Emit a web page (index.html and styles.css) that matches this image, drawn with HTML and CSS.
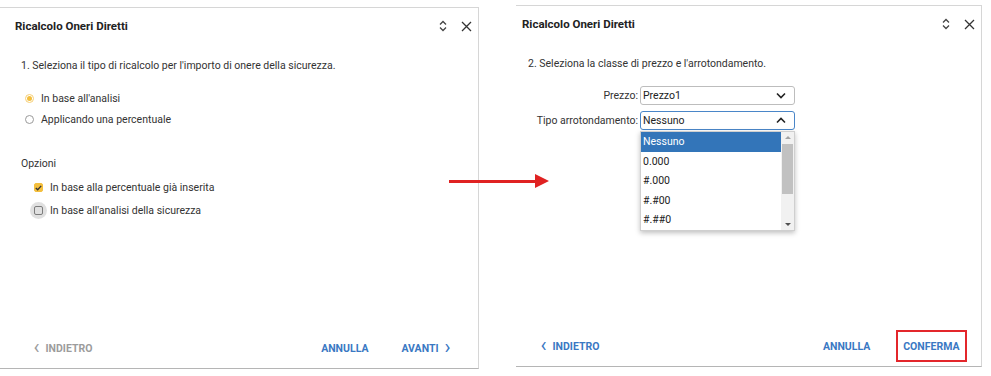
FILE: index.html
```html
<!DOCTYPE html>
<html lang="it">
<head>
    <meta charset="UTF-8">
    <title>Ricalcolo Oneri Diretti</title>
    <link rel="stylesheet" href="styles.css">
</head>
<body>
    <div class="stage">
        <!-- Step 1 -->
        <section class="dialog dialog-first">
            <header class="dialog-header">
                <h1>Ricalcolo Oneri Diretti</h1>
                <div class="dialog-tools">
                    <svg class="tool-sort" width="8" height="12" viewBox="0 0 8 12"><path d="M1 4.5 L4 1.5 L7 4.5 M1 7.5 L4 10.5 L7 7.5" fill="none" stroke="#444" stroke-width="1.3"/></svg>
                    <svg class="tool-close" width="11" height="11" viewBox="0 0 11 11"><path d="M1 1 L10 10 M10 1 L1 10" fill="none" stroke="#333" stroke-width="1.3"/></svg>
                </div>
            </header>
            <div class="dialog-body">
                <p class="step">1. Seleziona il tipo di ricalcolo per l'importo di onere della sicurezza.</p>
                <ul class="radio-list">
                    <li><span class="radio checked"></span>In base all'analisi</li>
                    <li><span class="radio"></span>Applicando una percentuale</li>
                </ul>
                <p class="group-title">Opzioni</p>
                <ul class="check-list">
                    <li><span class="check checked"><svg width="7" height="6" viewBox="0 0 7 6"><path d="M0.8 3 L2.7 4.8 L6.2 0.9" fill="none" stroke="#333" stroke-width="1.3"/></svg></span>In base alla percentuale già inserita</li>
                    <li><span class="check focused"></span>In base all'analisi della sicurezza</li>
                </ul>
            </div>
            <footer class="dialog-footer">
                <button class="btn btn-disabled"><span class="chev">&lsaquo;</span>INDIETRO</button>
                <div class="footer-right">
                    <button class="btn">ANNULLA</button>
                    <button class="btn">AVANTI<span class="chev chev-right">&rsaquo;</span></button>
                </div>
            </footer>
        </section>

        <!-- Step 2 -->
        <section class="dialog dialog-second">
            <header class="dialog-header">
                <h1>Ricalcolo Oneri Diretti</h1>
                <div class="dialog-tools">
                    <svg class="tool-sort" width="8" height="12" viewBox="0 0 8 12"><path d="M1 4.5 L4 1.5 L7 4.5 M1 7.5 L4 10.5 L7 7.5" fill="none" stroke="#444" stroke-width="1.3"/></svg>
                    <svg class="tool-close" width="11" height="11" viewBox="0 0 11 11"><path d="M1 1 L10 10 M10 1 L1 10" fill="none" stroke="#333" stroke-width="1.3"/></svg>
                </div>
            </header>
            <div class="dialog-body">
                <p class="step">2. Seleziona la classe di prezzo e l'arrotondamento.</p>
                <div class="form-grid">
                    <label>Prezzo:</label>
                    <div class="select">
                        <span>Prezzo1</span>
                        <svg width="10" height="7" viewBox="0 0 10 7"><path d="M1 1.5 L5 5.5 L9 1.5" fill="none" stroke="#222" stroke-width="1.6"/></svg>
                    </div>
                    <label>Tipo arrotondamento:</label>
                    <div class="select select-open">
                        <span>Nessuno</span>
                        <svg width="10" height="7" viewBox="0 0 10 7"><path d="M1 5.5 L5 1.5 L9 5.5" fill="none" stroke="#222" stroke-width="1.6"/></svg>
                        <div class="dropdown">
                            <ul class="options">
                                <li class="active">Nessuno</li>
                                <li>0.000</li>
                                <li>#.000</li>
                                <li>#.#00</li>
                                <li>#.##0</li>
                            </ul>
                            <div class="scrollbar">
                                <span class="arrow-up"></span>
                                <span class="thumb"></span>
                                <span class="arrow-down"></span>
                            </div>
                        </div>
                    </div>
                </div>
            </div>
            <footer class="dialog-footer">
                <button class="btn"><span class="chev">&lsaquo;</span>INDIETRO</button>
                <div class="footer-right">
                    <button class="btn">ANNULLA</button>
                    <button class="btn btn-marked">CONFERMA</button>
                </div>
            </footer>
        </section>

        <div class="flow-arrow"></div>
    </div>
</body>
</html>
```

FILE: styles.css
```css
/* Base styles */
* {
    margin: 0;
    padding: 0;
    box-sizing: border-box;
}

:root {
    --text: #333;
    --title: #222;
    --blue: #3a78c3;
    --yellow: #f4bf3e;
    --line: #d6d6d6;
}

body {
    font-family: Roboto, "Liberation Sans", sans-serif;
    font-size: 10.5px;
    color: var(--text);
    background: #fff;
}

.stage {
    position: relative;
    width: 991px;
    height: 376px;
    display: flex;
    align-items: flex-start;
}

/* Dialog */
.dialog {
    display: flex;
    flex-direction: column;
    background: #fff;
    border-top: 1px solid var(--line);
    border-right: 1px solid var(--line);
    border-bottom: 1px solid #b5b5b5;
}

.dialog-first {
    width: 479px;
    height: 362px;
    margin-top: 7px;
    padding-left: 9px;
}

.dialog-second {
    width: 466px;
    height: 362px;
    margin-top: 5px;
    margin-left: 37px;
}

.dialog-header {
    display: flex;
    justify-content: space-between;
    align-items: center;
    padding: 11px 6px 10px 6px;
}

.dialog-header h1 {
    font-size: 11.5px;
    font-weight: 700;
    line-height: 14px;
    color: var(--title);
}

.dialog-tools {
    display: flex;
    align-items: center;
    gap: 14px;
}

.dialog-body {
    flex: 1;
    padding: 16px 12px 0;
}

.step {
    line-height: 14px;
}

/* Radio and checkboxes */
.radio-list,
.check-list {
    list-style: none;
}

.radio-list {
    margin-top: 15px;
    padding-left: 4px;
}

.radio-list li,
.check-list li {
    display: flex;
    align-items: center;
    height: 21px;
}

.radio {
    width: 9px;
    height: 9px;
    border: 1px solid #9a9a9a;
    border-radius: 50%;
    margin-right: 7px;
    display: flex;
    align-items: center;
    justify-content: center;
}

.radio.checked {
    border-color: #f6cf77;
}

.radio.checked::after {
    content: '';
    width: 5px;
    height: 5px;
    border-radius: 50%;
    background: var(--yellow);
}

.group-title {
    margin-top: 27px;
    line-height: 14px;
}

.check-list {
    margin-top: 5px;
    padding-left: 13px;
}

.check-list li {
    height: 23px;
}

.check {
    position: relative;
    width: 9px;
    height: 9px;
    border: 1px solid #8e8e8e;
    border-radius: 2px;
    margin-right: 7px;
    display: flex;
    align-items: center;
    justify-content: center;
}

.check.checked {
    border-color: var(--yellow);
    background: var(--yellow);
}

.check.focused::before {
    content: '';
    position: absolute;
    left: -5px;
    top: -5px;
    width: 17px;
    height: 17px;
    border-radius: 50%;
    background: rgba(0, 0, 0, 0.12);
}

/* Form */
.form-grid {
    display: grid;
    grid-template-columns: 110px 155px;
    column-gap: 2px;
    row-gap: 6px;
    margin-top: 15px;
    align-items: center;
}

.form-grid label {
    text-align: right;
}

.select {
    position: relative;
    height: 19px;
    border: 1px solid #bdbdbd;
    border-radius: 3px;
    display: flex;
    align-items: center;
    justify-content: space-between;
    padding: 0 8px 0 2px;
    color: #222;
}

.select-open {
    border-color: #4a86c8;
}

.dropdown {
    position: absolute;
    left: -1px;
    top: 19px;
    width: 155px;
    height: 100px;
    display: flex;
    background: #fff;
    border: 1px solid #cfcfcf;
    box-shadow: 0 2px 5px rgba(0, 0, 0, 0.25);
    z-index: 5;
}

.options {
    flex: 1;
    list-style: none;
}

.options li {
    height: 19.6px;
    line-height: 20px;
    padding-left: 2px;
    color: #222;
}

.options li.active {
    background: #3375b9;
    color: #fff;
}

.scrollbar {
    width: 13px;
    background: #f1f1f1;
    display: flex;
    flex-direction: column;
    align-items: center;
    padding: 4px 0;
}

.arrow-up,
.arrow-down {
    width: 0;
    height: 0;
    border-left: 3px solid transparent;
    border-right: 3px solid transparent;
}

.arrow-up {
    border-bottom: 3px solid #a3a3a3;
}

.arrow-down {
    border-top: 3px solid #505050;
}

.thumb {
    width: 11px;
    height: 50px;
    margin: 5px 0 auto;
    background: #c1c1c1;
}

/* Footer */
.dialog-footer {
    display: flex;
    justify-content: space-between;
    align-items: center;
    padding: 0 14px 4px 17px;
}

.dialog-first .dialog-footer {
    padding-right: 20px;
}

.footer-right {
    display: flex;
    gap: 18px;
}

.btn {
    display: flex;
    align-items: center;
    height: 32px;
    padding: 0 5.5px;
    border: 2px solid transparent;
    background: none;
    font-family: Roboto, "Liberation Sans", sans-serif;
    font-size: 10.5px;
    font-weight: 700;
    color: var(--blue);
    cursor: pointer;
}

.btn-disabled {
    color: #9c9c9c;
}

.btn-marked {
    border-color: #e3262b;
}

.chev {
    font-size: 20px;
    font-weight: 400;
    line-height: 14px;
    margin: -3px 6px 0 0;
}

.chev-right {
    margin: -3px 0 0 6px;
}

/* Arrow between steps */
.flow-arrow {
    position: absolute;
    left: 449px;
    top: 180px;
    width: 88px;
    height: 3px;
    background: #e02222;
}

.flow-arrow::after {
    content: '';
    position: absolute;
    left: 86px;
    top: -6px;
    border-top: 7.5px solid transparent;
    border-bottom: 7.5px solid transparent;
    border-left: 14px solid #e02222;
}
```
